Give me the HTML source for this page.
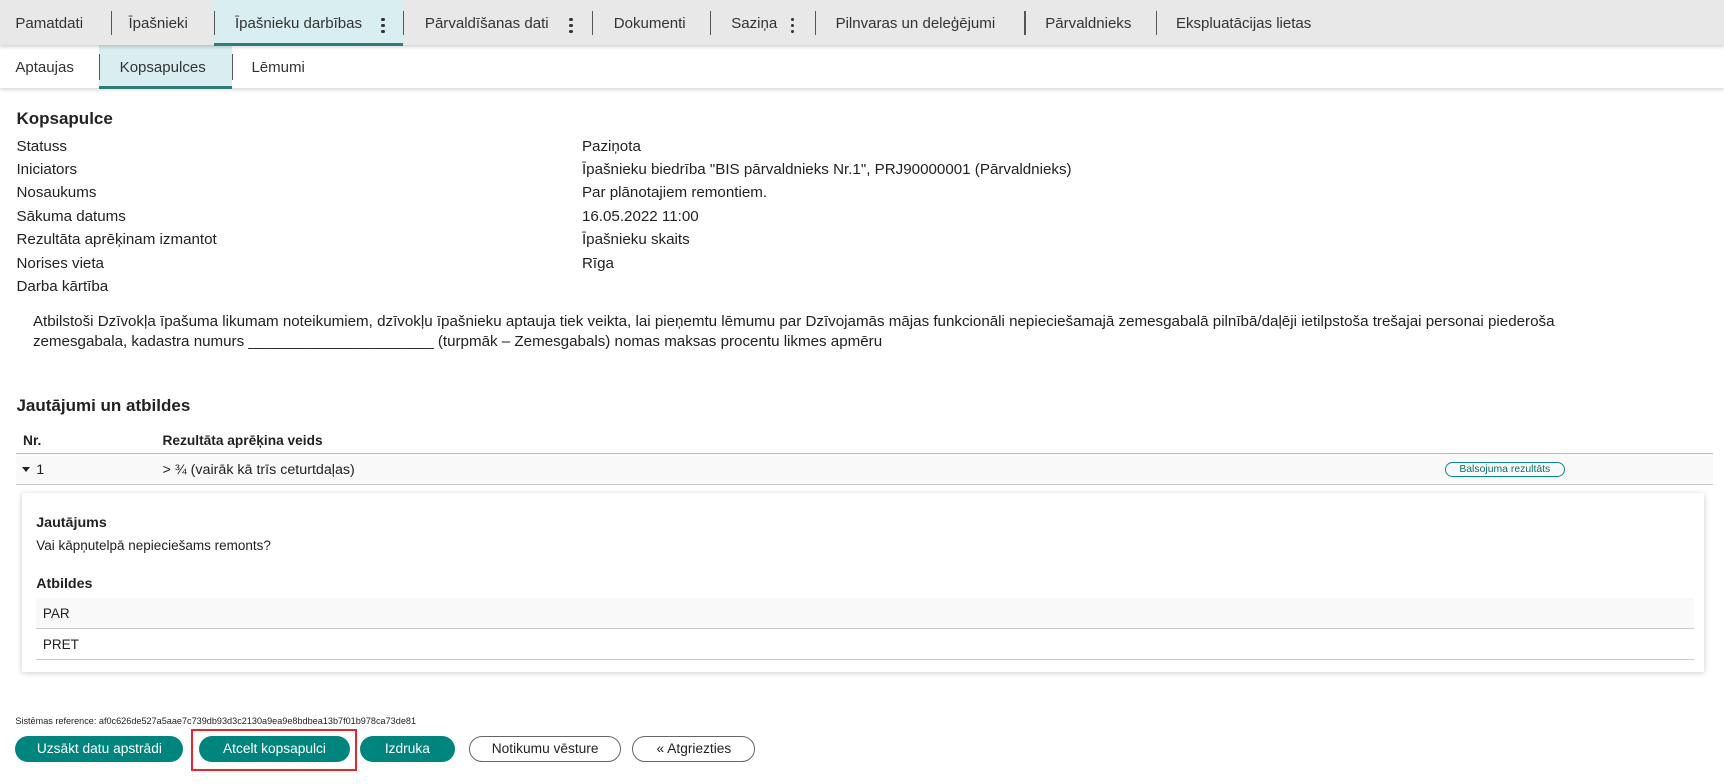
<!DOCTYPE html>
<html><head><meta charset="utf-8">
<style>
html,body{margin:0;padding:0;background:#fff;}
body{zoom:1.098;width:1570px;height:714px;overflow:hidden;position:relative;font-family:"Liberation Sans",Arial,sans-serif;color:#222;}
.a{position:absolute;white-space:nowrap;}
.top{position:absolute;left:0;top:0;width:1570px;height:41px;background:#e8e8e8;box-shadow:0 2px 3px rgba(0,0,0,.18);z-index:2}
.sub{position:absolute;left:0;top:41px;width:1570px;height:39px;background:#fff;box-shadow:0 2px 3px rgba(0,0,0,.15);z-index:1}
.t{position:absolute;font-size:13.7px;color:#333;top:14px}
.sep{position:absolute;width:1px;background:#555;}
.dots{position:absolute;width:4px;}
.dots i{display:block;width:3.5px;height:3.5px;border-radius:50%;background:#333;margin-bottom:2px}
.lbl{font-size:13.8px;left:15px}
.val{font-size:13.8px;left:530px}
.btn{position:absolute;top:670px;height:24px;border-radius:12px;font-size:12.5px;text-align:center;line-height:24px;box-sizing:border-box}
.f{background:#00847e;color:#fff}
.o{border:1px solid #666;color:#222;line-height:22px;background:#fff}
</style></head><body>
<div class="top">
  <div style="position:absolute;left:195px;top:0;width:172px;height:39px;background:#d8eef0;border-bottom:3px solid #2f7b78"></div>
  <span class="t" style="left:14px">Pamatdati</span>
  <div class="sep" style="left:101px;top:10px;height:22px"></div>
  <span class="t" style="left:117px">Īpašnieki</span>
  <div class="sep" style="left:195px;top:10px;height:22px"></div>
  <span class="t" style="left:214px">Īpašnieku darbības</span>
  <div class="dots" style="left:347px;top:16px"><i></i><i></i><i></i></div>
  <div class="sep" style="left:367px;top:10px;height:22px"></div>
  <span class="t" style="left:387px">Pārvaldīšanas dati</span>
  <div class="dots" style="left:518px;top:16px"><i></i><i></i><i></i></div>
  <div class="sep" style="left:539px;top:10px;height:22px"></div>
  <span class="t" style="left:559px">Dokumenti</span>
  <div class="sep" style="left:647px;top:10px;height:22px"></div>
  <span class="t" style="left:666px">Saziņa</span>
  <div class="dots" style="left:720px;top:16px"><i></i><i></i><i></i></div>
  <div class="sep" style="left:742px;top:10px;height:22px"></div>
  <span class="t" style="left:761px">Pilnvaras un deleģējumi</span>
  <div class="sep" style="left:933px;top:10px;height:22px"></div>
  <span class="t" style="left:952px">Pārvaldnieks</span>
  <div class="sep" style="left:1053px;top:10px;height:22px"></div>
  <span class="t" style="left:1071px">Ekspluatācijas lietas</span>
</div>
<div class="sub">
  <div style="position:absolute;left:90px;top:0;width:121px;height:37px;background:#d8eef0;border-bottom:3px solid #2f7b78"></div>
  <span class="t" style="left:14px;top:13px">Aptaujas</span>
  <div class="sep" style="left:90px;top:8px;height:24px"></div>
  <span class="t" style="left:109px;top:13px">Kopsapulces</span>
  <div class="sep" style="left:211px;top:8px;height:24px"></div>
  <span class="t" style="left:229px;top:13px">Lēmumi</span>
</div>

<div class="a" style="left:15px;top:99px;font-size:15.5px;font-weight:bold">Kopsapulce</div>
<div class="a lbl" style="top:126px">Statuss</div><div class="a val" style="top:126px">Paziņota</div>
<div class="a lbl" style="top:147px">Iniciators</div><div class="a val" style="top:147px">Īpašnieku biedrība "BIS pārvaldnieks Nr.1", PRJ90000001 (Pārvaldnieks)</div>
<div class="a lbl" style="top:168px">Nosaukums</div><div class="a val" style="top:168px">Par plānotajiem remontiem.</div>
<div class="a lbl" style="top:189px">Sākuma datums</div><div class="a val" style="top:189px">16.05.2022 11:00</div>
<div class="a lbl" style="top:210px">Rezultāta aprēķinam izmantot</div><div class="a val" style="top:210px">Īpašnieku skaits</div>
<div class="a lbl" style="top:232px">Norises vieta</div><div class="a val" style="top:232px">Rīga</div>
<div class="a lbl" style="top:253px">Darba kārtība</div>
<div class="a" style="left:30px;top:284px;font-size:13.8px;line-height:18px">Atbilstoši Dzīvokļa īpašuma likumam noteikumiem, dzīvokļu īpašnieku aptauja tiek veikta, lai pieņemtu lēmumu par Dzīvojamās mājas funkcionāli nepieciešamajā zemesgabalā pilnībā/daļēji ietilpstoša trešajai personai piederoša<br>zemesgabala, kadastra numurs ______________________ (turpmāk – Zemesgabals) nomas maksas procentu likmes apmēru</div>

<div class="a" style="left:15px;top:361px;font-size:15.5px;font-weight:bold">Jautājumi un atbildes</div>
<div class="a" style="left:21px;top:394px;font-size:12.5px;font-weight:bold">Nr.</div>
<div class="a" style="left:148px;top:394px;font-size:12.5px;font-weight:bold">Rezultāta aprēķina veids</div>
<div style="position:absolute;left:15px;top:413px;width:1545px;height:27px;background:#f9f9f9;border-top:1px solid #bbb;border-bottom:1px solid #ccc"></div>
<div class="a" style="left:20px;top:425px;width:0;height:0;border-left:4px solid transparent;border-right:4px solid transparent;border-top:5px solid #222"></div>
<div class="a" style="left:33px;top:421px;font-size:13px">1</div>
<div class="a" style="left:148px;top:421px;font-size:13px">&gt; ¾ (vairāk kā trīs ceturtdaļas)</div>
<div class="a" style="left:1316px;top:421px;width:109px;height:13px;border:1px solid #0a8a84;border-radius:7px;box-sizing:border-box;font-size:9.5px;line-height:12px;text-align:center;color:#0a6f6b">Balsojuma rezultāts</div>

<div style="position:absolute;left:20px;top:449px;width:1532px;height:163px;background:#fff;box-shadow:0 1px 5px rgba(0,0,0,.22)"></div>
<div class="a" style="left:33px;top:469px;font-size:13px;font-weight:bold">Jautājums</div>
<div class="a" style="left:33px;top:490px;font-size:12.3px">Vai kāpņutelpā nepieciešams remonts?</div>
<div class="a" style="left:33px;top:525px;font-size:13px;font-weight:bold">Atbildes</div>
<div style="position:absolute;left:33px;top:545px;width:1510px;height:27px;background:#f9f9f9;border-bottom:1px solid #ccc"></div>
<div class="a" style="left:39px;top:552px;font-size:12.3px">PAR</div>
<div style="position:absolute;left:33px;top:573px;width:1510px;height:27px;border-bottom:1px solid #ccc"></div>
<div class="a" style="left:39px;top:580px;font-size:12.3px">PRET</div>

<div class="a" style="left:14px;top:652px;font-size:8.3px">Sistēmas reference: af0c626de527a5aae7c739db93d3c2130a9ea9e8bdbea13b7f01b978ca73de81</div>
<div style="position:absolute;left:174px;top:664px;width:151px;height:38px;border:2px solid #e3262f;box-sizing:border-box"></div>
<div class="btn f" style="left:14px;width:153px">Uzsākt datu apstrādi</div>
<div class="btn f" style="left:181px;width:138px">Atcelt kopsapulci</div>
<div class="btn f" style="left:328px;width:86px">Izdruka</div>
<div class="btn o" style="left:427px;width:139px">Notikumu vēsture</div>
<div class="btn o" style="left:576px;width:112px">« Atgriezties</div>
</body></html>
